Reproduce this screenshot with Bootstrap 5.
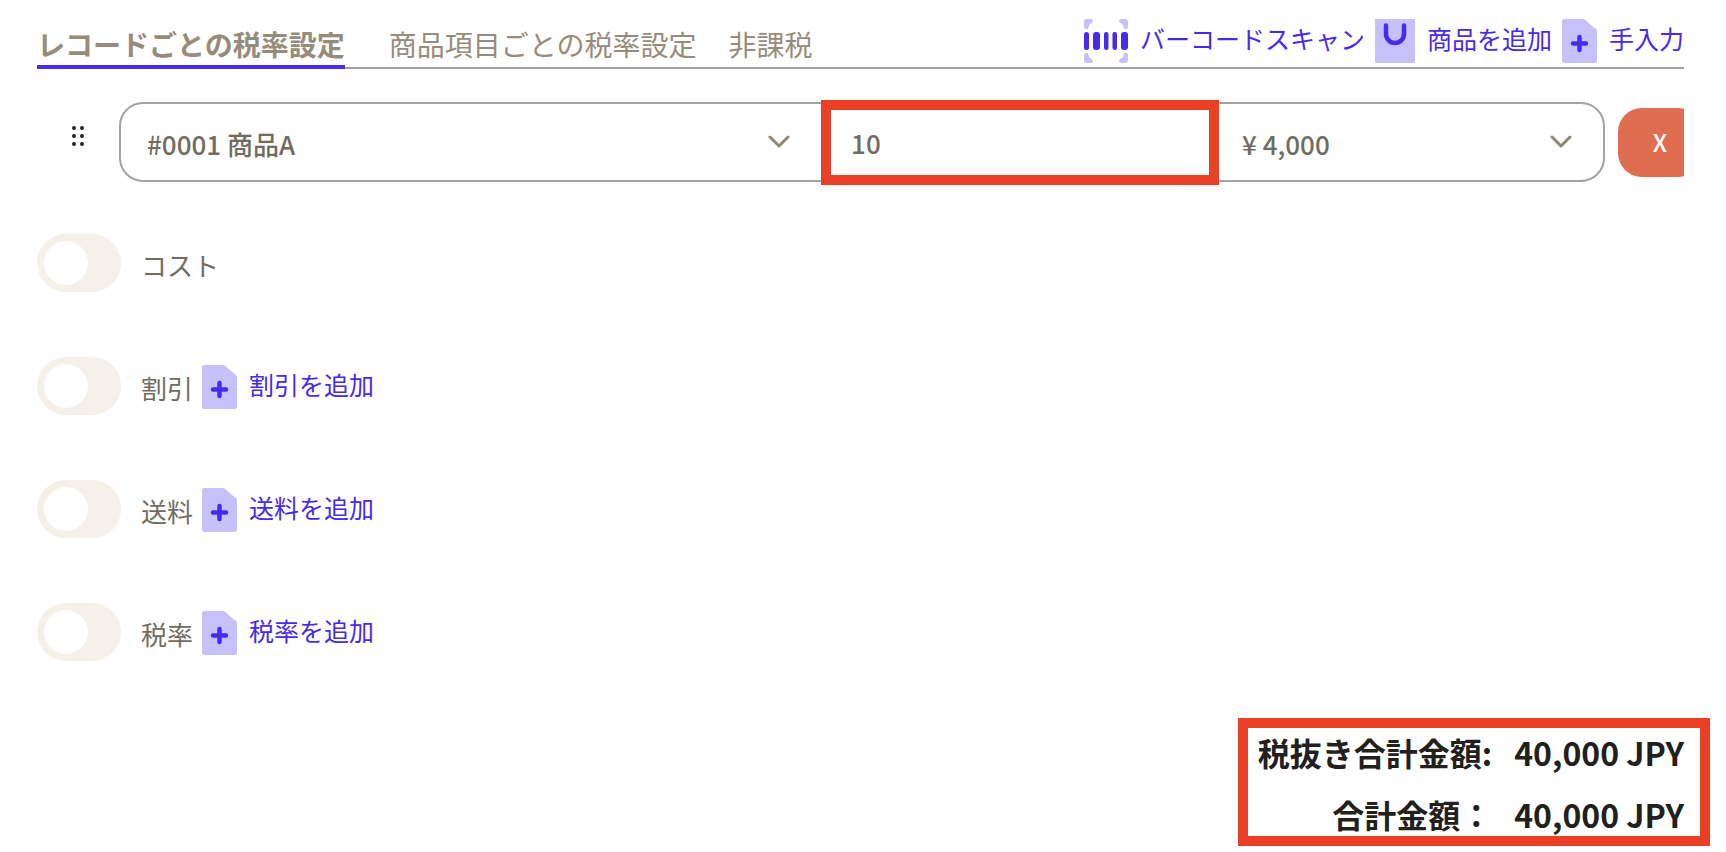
<!DOCTYPE html>
<html lang="ja">
<head>
<meta charset="utf-8">
<meta name="viewport" content="width=device-width, initial-scale=1">
<title>税率設定</title>
<link rel="stylesheet" href="https://cdn.jsdelivr.net/npm/bootstrap@5.3.0/dist/css/bootstrap.min.css">
<style>
  :root { --accent: #472aea; --accent-soft: #c7c0f9; --ink: #716c62; --muted: #968c7c; --rule: #a3a3a3; --alert: #ea4026; }
  body { font-family: "Noto Sans CJK JP", sans-serif; color: var(--ink); background: #fff; }
  .page { padding: 0 16px 0 37px; }
  .content { padding-right: 26px; }
  .topbar { height: 69px; border-bottom: 2px solid var(--rule); }
  .tax-tabs { --bs-nav-link-color: var(--muted); --bs-nav-link-hover-color: var(--muted); gap: 32px; }
  .tax-tabs .nav-link { padding: 0 0 3px; font-size: 28px; line-height: 36px; border-bottom: 4px solid transparent; margin-bottom: -2px; }
  .tax-tabs .nav-link.active { font-weight: 700; color: var(--muted); border-color: var(--accent); margin-right: 12px; }
  .actions { gap: 10px; }
  .act { gap: 12px; color: var(--accent); font-size: 25px; line-height: 38px; text-decoration: none; white-space: nowrap; }
  .act span { margin-bottom: 6px; }
  .act svg { flex: none; }
  .item-row { margin-top: 31px; height: 84px; }
  .grip { width: 82px; padding: 0 0 12px 35px; border: 0; background: none; line-height: 0; text-align: left; }
  .fields { height: 80px; border: 2px solid var(--rule); border-radius: 24px; }
  .fields .form-control, .fields .form-select { font-size: 26px; font-weight: 500; color: var(--ink); border: 0; border-radius: 24px; background-color: transparent; height: 76px; padding: 2px 60px 0 26px; }
  .fields .form-select { background-image: url("data:image/svg+xml,%3Csvg xmlns='http://www.w3.org/2000/svg' viewBox='0 0 22 14'%3E%3Cpath d='M2 2l9 9 9-9' fill='none' stroke='%238f877a' stroke-width='3' stroke-linecap='round' stroke-linejoin='round'/%3E%3C/svg%3E"); background-size: 22px 14px; background-position: right 31px center; }
  .f-product { flex: 702 1 0; }
  .f-qty { flex: 399 1 0; }
  .f-price { flex: 385 1 0; }
  .fields .f-qty .form-control { height: 85px; border: 10px solid var(--alert); border-radius: 0; background: #fff; padding: 0 20px; }
  .fields .f-price .form-select { padding-left: 23px; }
  .remove-slot { width: 66px; margin-left: 13px; overflow: hidden; }
  .remove-slot .btn { width: 84px; height: 69px; border-radius: 24px; background: #df6d50; color: #fff; font-size: 24px; font-weight: 500; border: 0; padding: 0; }
  .options { margin-top: 50px; gap: 65px; }
  .opt { height: 58px; }
  .opt .form-check-input { width: 84px; height: 58px; margin: 0; border: 0; border-radius: 29px; background-color: #f5f0ea; background-image: url("data:image/svg+xml,%3Csvg xmlns='http://www.w3.org/2000/svg' viewBox='0 0 58 58'%3E%3Ccircle cx='29' cy='29' r='22' fill='%23fff'/%3E%3C/svg%3E"); background-size: 58px 58px; background-position: left center; }
  .opt label { font-size: 26px; line-height: 38px; margin-left: 20px; padding-top: 4px; }
  .opt .act { margin-left: 9px; padding-top: 2px; }
  .totals { margin-top: 57px; border: 10px solid var(--alert); width: 472px; height: 128px; padding: 0 16px 0 0; color: #21201c; font-weight: 700; font-size: 32px; line-height: 48px; }
  .totals dl { gap: 14px 22px; grid-template-columns: auto auto; justify-content: end; }
</style>
<script src="https://cdn.jsdelivr.net/npm/bootstrap@5.3.0/dist/js/bootstrap.bundle.min.js"></script>
</head>
<body>
<svg class="d-none" aria-hidden="true">
  <symbol id="doc-plus" viewBox="0 0 35 44">
    <path d="M2 0h20l13 11v31a2 2 0 0 1-2 2H2a2 2 0 0 1-2-2V2a2 2 0 0 1 2-2z" fill="#c7c0f9"/>
    <path d="M17.500 18v13M11 24.500h13" stroke="#472aea" stroke-width="4.500" stroke-linecap="round"/>
  </symbol>
</svg>
<main class="page">
  <div class="content">
    <header class="topbar d-flex justify-content-between align-items-end">
      <ul class="nav tax-tabs flex-nowrap text-nowrap">
        <li class="nav-item"><a class="nav-link active" aria-current="page" href="#">レコードごとの税率設定</a></li>
        <li class="nav-item"><a class="nav-link" href="#">商品項目ごとの税率設定</a></li>
        <li class="nav-item"><a class="nav-link" href="#">非課税</a></li>
      </ul>
      <div class="actions d-flex mb-1">
        <a class="act d-flex align-items-center" href="#">
          <svg width="44" height="44" viewBox="0 0 44 44" aria-hidden="true">
            <g fill="#c7c0f9">
              <path id="corner" d="M0 8V3a3 3 0 0 1 3-3h4a2 2 0 0 1 2 2q0 2-3 3Q5 6 4.500 8a2.250 2.250 0 0 1-4.500 0z"/>
              <use href="#corner" transform="matrix(-1 0 0 1 44 0)"/>
              <use href="#corner" transform="matrix(1 0 0 -1 0 44)"/>
              <use href="#corner" transform="matrix(-1 0 0 -1 44 44)"/>
            </g>
            <g fill="#472aea">
              <rect x="0" y="13" width="5" height="18" rx="2.500"/><rect x="9" y="13" width="7" height="18" rx="3"/><rect x="20" y="13" width="4.500" height="18" rx="2.200"/><rect x="28.500" y="13" width="4.500" height="18" rx="2.200"/><rect x="37" y="13" width="7" height="18" rx="3"/>
            </g>
          </svg>
          <span>バーコードスキャン</span>
        </a>
        <a class="act d-flex align-items-center" href="#">
          <svg width="40" height="44" viewBox="0 0 40 44" aria-hidden="true">
            <path d="M0 0h40v42.500a1.500 1.500 0 0 1-1.500 1.500h-37A1.500 1.500 0 0 1 0 42.500z" fill="#c7c0f9"/>
            <path d="M11 6.500v8.500a9 9 0 0 0 18 0V6.500" fill="none" stroke="#472aea" stroke-width="4.500" stroke-linecap="round"/>
          </svg>
          <span>商品を追加</span>
        </a>
        <a class="act d-flex align-items-center" href="#">
          <svg width="35" height="44" aria-hidden="true"><use href="#doc-plus"/></svg>
          <span>手入力</span>
        </a>
      </div>
    </header>

    <div class="item-row d-flex align-items-center">
      <button class="grip" type="button" aria-label="並べ替え">
        <svg width="12" height="20" viewBox="0 0 12 20" fill="#222"><circle cx="2" cy="2" r="2"/><circle cx="10" cy="2" r="2"/><circle cx="2" cy="10" r="2"/><circle cx="10" cy="10" r="2"/><circle cx="2" cy="18" r="2"/><circle cx="10" cy="18" r="2"/></svg>
      </button>
      <div class="fields d-flex align-items-center flex-grow-1">
        <div class="f-product"><select class="form-select" aria-label="商品"><option>#0001 商品A</option></select></div>
        <div class="f-qty"><input class="form-control" type="text" value="10" aria-label="数量"></div>
        <div class="f-price"><select class="form-select" aria-label="価格"><option>¥ 4,000</option></select></div>
      </div>
      <div class="remove-slot"><button class="btn" type="button">X</button></div>
    </div>

    <div class="options d-flex flex-column">
      <div class="opt form-switch d-flex align-items-center p-0">
        <input class="form-check-input" type="checkbox" role="switch" id="cost"><label for="cost">コスト</label>
      </div>
      <div class="opt form-switch d-flex align-items-center p-0">
        <input class="form-check-input" type="checkbox" role="switch" id="discount"><label for="discount">割引</label>
        <a class="act d-flex align-items-center" href="#"><svg width="35" height="44" aria-hidden="true"><use href="#doc-plus"/></svg><span>割引を追加</span></a>
      </div>
      <div class="opt form-switch d-flex align-items-center p-0">
        <input class="form-check-input" type="checkbox" role="switch" id="shipping"><label for="shipping">送料</label>
        <a class="act d-flex align-items-center" href="#"><svg width="35" height="44" aria-hidden="true"><use href="#doc-plus"/></svg><span>送料を追加</span></a>
      </div>
      <div class="opt form-switch d-flex align-items-center p-0">
        <input class="form-check-input" type="checkbox" role="switch" id="tax"><label for="tax">税率</label>
        <a class="act d-flex align-items-center" href="#"><svg width="35" height="44" aria-hidden="true"><use href="#doc-plus"/></svg><span>税率を追加</span></a>
      </div>
    </div>
  </div>

  <section class="totals ms-auto">
    <dl class="d-grid m-0 text-end text-nowrap">
      <dt>税抜き合計金額:</dt><dd class="m-0">40,000 JPY</dd>
      <dt>合計金額：</dt><dd class="m-0">40,000 JPY</dd>
    </dl>
  </section>
</main>
</body>
</html>
